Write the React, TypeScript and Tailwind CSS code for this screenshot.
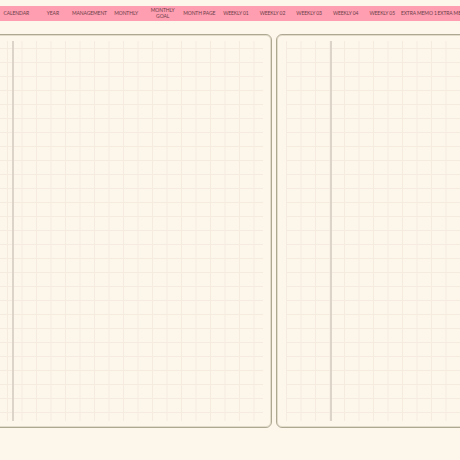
import React from 'react';

const TABS = [
    'CALENDAR',
    'YEAR',
    'MANAGEMENT',
    'MONTHLY',
    'MONTHLY GOAL',
    'MONTH PAGE',
    'WEEKLY 01',
    'WEEKLY 02',
    'WEEKLY 03',
    'WEEKLY 04',
    'WEEKLY 05',
    'EXTRA MEMO 1',
    'EXTRA MEMO 2',
];

// faint squared paper
const GRID =
    'bg-[linear-gradient(to_right,#f5ebdf_1px,transparent_1px),linear-gradient(to_bottom,#f5ebdf_1px,transparent_1px)] bg-[size:14.5px_14px]';

function TabBar() {
    return (
        <div className="mt-[6px] h-[15px] flex bg-[#ff9db1] overflow-hidden">
            <div className="flex ml-[-2px] shrink-0">
                {TABS.map((tab) => (
                    <div
                        key={tab}
                        className="w-[36.6px] shrink-0 flex items-center justify-center text-center text-[5px] leading-[5.5px] tracking-[-0.1px] text-[#6a4148] whitespace-nowrap"
                    >
                        {tab === 'MONTHLY GOAL' ? (
                            <span>
                                MONTHLY
                                <br />
                                GOAL
                            </span>
                        ) : (
                            tab
                        )}
                    </div>
                ))}
            </div>
        </div>
    );
}

export default function App() {
    return (
        <div
            className="w-[460px] h-[460px] bg-[#fdf6ea] overflow-hidden"
            style={{ fontFamily: 'Lato, "Noto Sans", sans-serif' }}
        >
            <TabBar />

            <div className="mt-[13px] flex gap-[4px] ml-[-10px]">
                {/* left page */}
                <div className="w-[282px] h-[394px] shrink-0 rounded-[6px] border-[1.5px] border-[#aea791] shadow-[inset_0_0_0_1px_#e2dccb] pl-[6px] pr-[8px] py-[6px]">
                    <div className={`h-full ${GRID} bg-[position:10px_7px] flex`}>
                        <div className="w-[15px] shrink-0" />
                        <div className="w-[2px] h-full bg-[#dcd4c8]" />
                    </div>
                </div>

                {/* right page */}
                <div className="w-[282px] h-[394px] shrink-0 rounded-[6px] border-[1.5px] border-[#aea791] shadow-[inset_0_0_0_1px_#e2dccb] pl-[9px] pr-[8px] py-[6px]">
                    <div className={`h-full ${GRID} bg-[position:0px_7px] flex`}>
                        <div className="w-[44px] shrink-0" />
                        <div className="w-[2px] h-full bg-[#dcd4c8]" />
                    </div>
                </div>
            </div>
        </div>
    );
}
